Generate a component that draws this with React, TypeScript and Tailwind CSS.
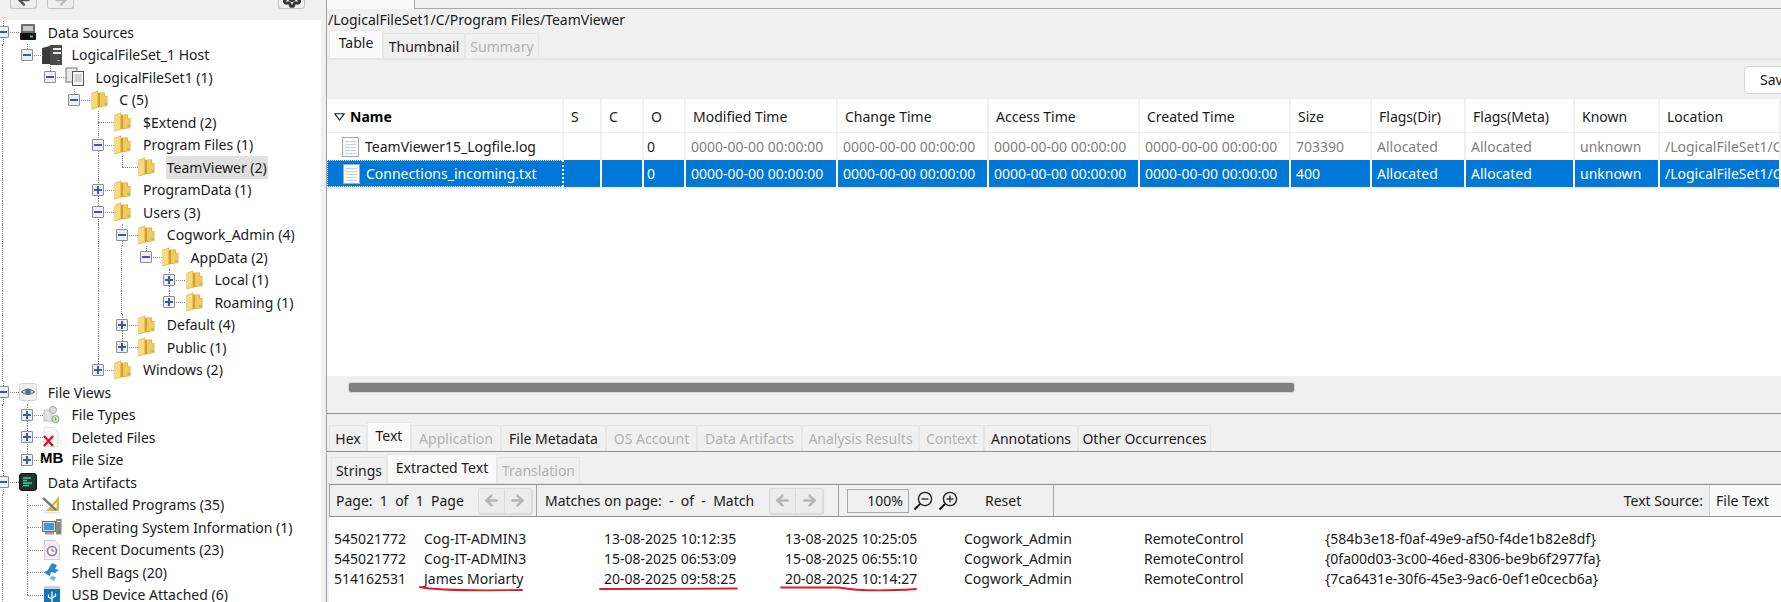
import type { ReactNode } from 'react'
import { ArrowLeft, ArrowRight, Settings } from 'lucide-react'

const FONT = "font-['Noto_Sans','Liberation_Sans',sans-serif] text-[14px] leading-none text-[#1a1a1a]"

function Folder() {
  return (
    <svg width="17" height="20" viewBox="0 0 17 20" className="block">
      <path d="M0.5 3 L7 0.5 L7 2.5 L14 2.5 L14 6 L16.5 6 L16.5 16 L7 17.5 L0.5 19.5 Z" fill="#d9a93c" />
      <path d="M1 3.3 L6.5 1.2 L6.5 17 L1 18.8 Z" fill="#f6da7c" />
      <path d="M7 3 L13.5 3 L13.5 15.5 L7 17 Z" fill="#d59e2e" />
      <path d="M9 3 L9 16.5 L16 15.5 L16 6.5 L13.5 6.5 L13.5 3 Z" fill="#f0c95c" />
      <rect x="13.5" y="13" width="2.5" height="2" fill="#8fc98a" />
    </svg>
  )
}

function Drive() {
  return (
    <svg width="18" height="18" viewBox="0 0 18 18" className="block">
      <rect x="2" y="1" width="14" height="10" rx="1" fill="#6b6b6b" />
      <rect x="4" y="3" width="10" height="5" fill="#c9c9c9" />
      <path d="M1 10 H17 V16 Q17 17 16 17 H2 Q1 17 1 16 Z" fill="#111" />
      <rect x="11" y="12.5" width="3" height="2" fill="#3bbfae" />
    </svg>
  )
}

function Server() {
  return (
    <svg width="20" height="20" viewBox="0 0 20 20" className="block">
      <path d="M0 3 L8 1 V19 H0 Z" fill="#3a3a3a" />
      <rect x="8" y="0" width="12" height="20" fill="#4a4a4a" />
      <rect x="11" y="3" width="8" height="2" fill="#e8e8e8" />
      <rect x="11" y="7" width="8" height="2" fill="#e8e8e8" />
      <rect x="15" y="15" width="3" height="1" fill="#999" />
    </svg>
  )
}

function Docs() {
  return (
    <svg width="20" height="20" viewBox="0 0 20 20" className="block">
      <rect x="1" y="1" width="11" height="14" fill="#e9e9e9" stroke="#777" />
      <rect x="7.5" y="4.5" width="11" height="14" fill="#f5f5f5" stroke="#555" />
      <path d="M9.5 8 H16.5 M9.5 10 H16.5 M9.5 12 H16.5 M9.5 14 H16.5" stroke="#aaa" />
    </svg>
  )
}

function Eye() {
  return (
    <svg width="18" height="18" viewBox="0 0 18 18" className="block">
      <rect x="0.5" y="0.5" width="17" height="17" rx="2" fill="#f1f1f1" stroke="#d5d5d5" />
      <path d="M2.5 9 Q9 3 15.5 9 Q9 14 2.5 9 Z" fill="#bfc9cf" stroke="#666" />
      <circle cx="9" cy="8.7" r="2.6" fill="#4c6f83" />
    </svg>
  )
}

function FileTypes() {
  return (
    <svg width="20" height="20" viewBox="0 0 20 20" className="block">
      <rect x="2" y="5" width="8" height="11" fill="#e3e3e3" stroke="#bdbdbd" />
      <circle cx="11" cy="5" r="3.5" fill="#dcdcdc" stroke="#a8a8a8" />
      <circle cx="13.5" cy="14" r="3.5" fill="#cfe3bd" stroke="#9a9a9a" />
      <rect x="13" y="12.5" width="1" height="3" fill="#6e9a50" />
    </svg>
  )
}

function Deleted() {
  return (
    <svg width="20" height="20" viewBox="0 0 20 20" className="block">
      <path d="M2 0.5 H12 L16 5 V19.5 H2 Z" fill="#f8f8f8" stroke="#e2e2e2" />
      <path d="M2 9 L11 19 M11 9 L2 19" stroke="#e0141b" strokeWidth="2.4" />
    </svg>
  )
}

function Artifacts() {
  return (
    <svg width="18" height="18" viewBox="0 0 18 18" className="block">
      <rect x="0.5" y="0.5" width="17" height="17" rx="2.5" fill="#2a2a2a" stroke="#111" />
      <rect x="2.5" y="3" width="13" height="12" fill="#1d3a33" />
      <path d="M4 5 H12 M4 7.5 H8 M4 10 H13 M4 12.5 H10" stroke="#46c79a" strokeWidth="1.5" />
    </svg>
  )
}

function Installed() {
  return (
    <svg width="20" height="20" viewBox="0 0 20 20" className="block">
      <path d="M17 1 V16 H4 Z M14.5 7.5 L9.5 13.5 H14.5 Z" fill="#d9b93a" fillRule="evenodd" />
      <path d="M1 3 L14 15" stroke="#6e7e88" strokeWidth="2.4" />
      <rect x="2" y="17" width="16" height="1.5" fill="#e5e5e5" />
    </svg>
  )
}

function OsInfo() {
  return (
    <svg width="20" height="18" viewBox="0 0 20 18" className="block">
      <rect x="0.5" y="3.5" width="13" height="10" fill="#d8d8d8" stroke="#6c6c6c" />
      <rect x="2" y="5" width="10" height="7" fill="#3f9ad6" />
      <rect x="3" y="14" width="9" height="2.5" fill="#9a9a9a" />
      <rect x="14" y="1" width="5.5" height="15.5" fill="#8a8a8a" />
      <rect x="15" y="3" width="3.5" height="1" fill="#e5e5e5" />
      <rect x="15.5" y="13" width="3" height="2" fill="#3aa14a" />
    </svg>
  )
}

function Recent() {
  return (
    <svg width="18" height="20" viewBox="0 0 18 20" className="block">
      <path d="M1.5 0.5 H12 L16.5 5 V19.5 H1.5 Z" fill="#f3eef3" stroke="#cfcfcf" />
      <circle cx="9" cy="11" r="4.5" fill="#fff" stroke="#9a6da3" strokeWidth="1.6" />
      <path d="M9 8.5 V11 H11.5" stroke="#7a4d83" fill="none" />
    </svg>
  )
}

function ShellBags() {
  return (
    <svg width="18" height="20" viewBox="0 0 18 20" className="block">
      <path d="M9 1 L14 3 L12 7 L16 8 L12 11 L8 10 L7 14 L3 12 L1 10 L5 8 L7 4 Z" fill="#2c86c4" />
      <path d="M8 14 L13 15 L11 19 L7 17 Z" fill="#6fb6e0" />
    </svg>
  )
}

function Usb() {
  return (
    <svg width="18" height="20" viewBox="0 0 18 20" className="block">
      <rect x="1" y="1" width="16" height="4" fill="#d0d0d0" />
      <rect x="1" y="4" width="16" height="15" fill="#1273b8" />
      <path d="M9 6.5 V17 M5.5 9.5 V12 L9 14 M12.5 8.5 V11 L9 13" stroke="#fff" strokeWidth="1.3" fill="none" />
    </svg>
  )
}

function FileIcon() {
  return (
    <svg width="17" height="20" viewBox="0 0 17 20" className="block">
      <rect x="0.5" y="0.5" width="16" height="19" fill="#fafafa" stroke="#a9a9a9" />
      <path d="M3 4.5 H14 M3 7.5 H14 M3 10.5 H14 M3 13.5 H14 M3 16.5 H14" stroke="#c5d4e4" />
    </svg>
  )
}

type TreeRow = {
  label: string
  level: number
  exp?: '-' | '+'
  guides: number[]
  last?: boolean
  icon: ReactNode
  selected?: boolean
}

const treeRows: TreeRow[] = [
  { label: 'Data Sources', level: 0, exp: '-', guides: [], icon: <Drive /> },
  { label: 'LogicalFileSet_1 Host', level: 1, exp: '-', guides: [0], last: true, icon: <Server /> },
  { label: 'LogicalFileSet1 (1)', level: 2, exp: '-', guides: [0], last: true, icon: <Docs /> },
  { label: 'C (5)', level: 3, exp: '-', guides: [0], last: true, icon: <Folder /> },
  { label: '$Extend (2)', level: 4, guides: [0], icon: <Folder /> },
  { label: 'Program Files (1)', level: 4, exp: '-', guides: [0], icon: <Folder /> },
  { label: 'TeamViewer (2)', level: 5, guides: [0, 4], last: true, icon: <Folder />, selected: true },
  { label: 'ProgramData (1)', level: 4, exp: '+', guides: [0], icon: <Folder /> },
  { label: 'Users (3)', level: 4, exp: '-', guides: [0], icon: <Folder /> },
  { label: 'Cogwork_Admin (4)', level: 5, exp: '-', guides: [0, 4], icon: <Folder /> },
  { label: 'AppData (2)', level: 6, exp: '-', guides: [0, 4, 5], last: true, icon: <Folder /> },
  { label: 'Local (1)', level: 7, exp: '+', guides: [0, 4, 5], icon: <Folder /> },
  { label: 'Roaming (1)', level: 7, exp: '+', guides: [0, 4, 5], last: true, icon: <Folder /> },
  { label: 'Default (4)', level: 5, exp: '+', guides: [0, 4], icon: <Folder /> },
  { label: 'Public (1)', level: 5, exp: '+', guides: [0, 4], last: true, icon: <Folder /> },
  { label: 'Windows (2)', level: 4, exp: '+', guides: [0], last: true, icon: <Folder /> },
  { label: 'File Views', level: 0, exp: '-', guides: [], icon: <Eye /> },
  { label: 'File Types', level: 1, exp: '+', guides: [0], icon: <FileTypes /> },
  { label: 'Deleted Files', level: 1, exp: '+', guides: [0], icon: <Deleted /> },
  {
    label: 'File Size',
    level: 1,
    exp: '+',
    guides: [0],
    last: true,
    icon: <span className="block text-[15px] font-bold text-black font-['Liberation_Sans'] -mt-[4px]">MB</span>,
  },
  { label: 'Data Artifacts', level: 0, exp: '-', guides: [], icon: <Artifacts /> },
  { label: 'Installed Programs (35)', level: 1, guides: [0], icon: <Installed /> },
  { label: 'Operating System Information (1)', level: 1, guides: [0], icon: <OsInfo /> },
  { label: 'Recent Documents (23)', level: 1, guides: [0], icon: <Recent /> },
  { label: 'Shell Bags (20)', level: 1, guides: [0], icon: <ShellBags /> },
  { label: 'USB Device Attached (6)', level: 1, guides: [0], last: true, icon: <Usb /> },
]

const dotLine = 'border-[#8a8a8a] border-dotted'

function Tree() {
  return (
    <div className="flex-1 bg-white overflow-hidden pt-[1px] mr-[5px]">
      {treeRows.map(r => (
        <div key={r.label} className="flex items-center h-[22.5px] -ml-[9px]">
          {Array.from({ length: r.level }).map((_, i) => (
            <div key={i} className="w-[23.8px] h-full shrink-0 flex justify-center">
              {r.guides.includes(i) && <div className={`h-full border-l ${dotLine}`} />}
            </div>
          ))}
          {/* own level cell: connectors sit behind the expander box */}
          <div className="relative w-[23.8px] h-full shrink-0 flex items-center justify-center">
            <div
              className={`absolute left-1/2 top-0 border-l ${dotLine} ${r.last || r.level === 0 ? 'h-1/2' : 'h-full'}`}
            />
            {r.level === 0 && <div className={`absolute left-1/2 top-1/2 h-1/2 border-l ${dotLine}`} />}
            <div className={`absolute left-1/2 top-1/2 w-[16px] border-t ${dotLine}`} />
            {r.exp && (
              <div className="relative w-[12px] h-[12px] bg-[#eef0f3] border border-[#8d8d8d] rounded-[1px] flex items-center justify-center">
                <div className="w-[8px] h-[2px] bg-[#3f5a9e]" />
                {r.exp === '+' && <div className="absolute w-[2px] h-[8px] bg-[#3f5a9e]" />}
              </div>
            )}
          </div>
          <div className="w-[32px] shrink-0 pl-[3px]">
            <div className="w-5 flex justify-center">{r.icon}</div>
          </div>
          <span className={`px-px whitespace-nowrap leading-[23px] ${r.selected ? 'bg-[#e0e0e0]' : ''}`}>{r.label}</span>
        </div>
      ))}
    </div>
  )
}

function TopButton({ children }: { children: ReactNode }) {
  return (
    <div className="w-[27px] h-[9px] bg-[#eeeeee] border border-t-0 border-[#c4c4c4] rounded-b-[3px] flex items-end justify-center overflow-hidden text-[#8a8a8a]">
      {children}
    </div>
  )
}

function Sidebar() {
  return (
    <aside className="w-[326px] shrink-0 flex flex-col bg-[#f0f0f0]">
      <div className="h-[20px] flex pl-[10px] pr-[21px] gap-[10px]">
        <TopButton>
          <ArrowLeft size={16} strokeWidth={3.5} className="text-[#555] shrink-0" />
        </TopButton>
        <TopButton>
          <ArrowRight size={16} strokeWidth={3.5} className="text-[#bbb] shrink-0" />
        </TopButton>
        <div className="flex-1" />
        <TopButton>
          <Settings size={20} strokeWidth={3.5} className="text-[#333] shrink-0" />
        </TopButton>
      </div>
      <Tree />
    </aside>
  )
}

function Tab({ label, state, w }: { label: string; state?: 'active' | 'disabled'; w: string }) {
  return (
    <div
      className={`${w} shrink-0 flex items-center justify-center border border-b-0 border-[#e6e6e6] whitespace-nowrap ${
        state === 'active' ? 'bg-[#fafafa] h-full pb-[3px]' : 'h-[calc(100%-3px)] mt-[3px] pt-[1px]'
      } ${state === 'disabled' ? 'text-[#b0b0b0]' : ''}`}
    >
      {label}
    </div>
  )
}

const tableGrid = 'grid grid-cols-[237px_38px_42px_42px_152px_151px_151px_151px_81px_94px_109px_85px_1fr]'

const headers = [
  'Name', 'S', 'C', 'O', 'Modified Time', 'Change Time', 'Access Time', 'Created Time',
  'Size', 'Flags(Dir)', 'Flags(Meta)', 'Known', 'Location',
]

const zero = '0000-00-00 00:00:00'
const rowRest = [zero, zero, zero, zero]
const location = '/LogicalFileSet1/C/Program Files/TeamViewer/'

function FileTable() {
  return (
    <div className="flex-1 bg-white overflow-hidden">
      <div className={`${tableGrid} h-[34px] border-b border-[#f0f0f0]`}>
        {headers.map((h, i) => (
          <div
            key={h}
            className={`bg-white border-r-2 border-[#f0f0f0] flex items-center pt-[3px] overflow-hidden whitespace-nowrap ${
              i === 0 ? 'font-bold text-black pl-[7px] gap-[5px]' : 'pl-[7px]'
            }`}
          >
            {i === 0 && (
              <svg width="11" height="8" viewBox="0 0 11 8">
                <path d="M0.7 0.7 H10.3 L5.5 7 Z" fill="none" stroke="#222" strokeWidth="1.1" />
              </svg>
            )}
            {h}
          </div>
        ))}
      </div>
      <Row
        name="TeamViewer15_Logfile.log"
        size="703390"
        textClass="text-[#808080]"
        cellClass="border-r-2 border-[#f0f0f0]"
      />
      <Row name="Connections_incoming.txt" size="400" selected textClass="text-white" cellClass="bg-[#0078d7] border-r-2 border-white" />
      <div className="h-[2px] bg-[#f0f0f0]" />
    </div>
  )
}

function Row({
  name,
  size,
  selected,
  textClass,
  cellClass,
}: {
  name: string
  size: string
  selected?: boolean
  textClass: string
  cellClass: string
}) {
  const rest = [...rowRest, size, 'Allocated', 'Allocated', 'unknown', location]
  return (
    <div className={`${tableGrid} h-[27px]`}>
      <div
        className={`${cellClass} flex items-center pl-[15px] gap-[6px] whitespace-nowrap ${
          selected ? 'text-white border-[1px] border-dotted border-[#e8872c]' : ''
        }`}
      >
        <FileIcon />
        {name}
      </div>
      <div className={cellClass} />
      <div className={cellClass} />
      <div className={`${cellClass} flex items-center pl-[3px] ${selected ? 'text-white' : ''}`}>0</div>
      {rest.map((v, i) => (
        <div
          key={i}
          className={`${cellClass} ${textClass} flex items-center pl-[5px] overflow-hidden whitespace-nowrap`}
        >
          {v}
        </div>
      ))}
    </div>
  )
}

function NavButtons() {
  return (
    <div className="flex h-[26px] rounded-[3px] border border-[#dcdcdc] shadow-[1px_1px_1px_#d8d8d8] bg-[#ececec]">
      <div className="w-[26px] flex items-center justify-center border-r border-[#dcdcdc]">
        <ArrowLeft size={17} strokeWidth={3.5} className="text-[#b5b5b5]" />
      </div>
      <div className="w-[26px] flex items-center justify-center">
        <ArrowRight size={17} strokeWidth={3.5} className="text-[#b5b5b5]" />
      </div>
    </div>
  )
}

function ZoomIcon({ plus }: { plus?: boolean }) {
  return (
    <svg width="20" height="20" viewBox="0 0 20 20">
      <circle cx="12" cy="8" r="6.6" fill="none" stroke="#222" strokeWidth="1.4" />
      <path d="M7 13 L1.5 18.5" stroke="#111" strokeWidth="2" />
      <path d="M8.5 8 H15.5" stroke="#333" strokeWidth="1.4" />
      {plus && <path d="M12 4.5 V11.5" stroke="#333" strokeWidth="1.4" />}
    </svg>
  )
}

function PageToolbar() {
  return (
    <div className="h-[33px] flex items-center border-y border-[#8f9396] ml-[2px]">
      <div className="flex items-center h-full w-[208px] pl-[6px] border-r border-[#a0a4a7] border-l">
        <span className="whitespace-pre">Page:  1  of  1  Page</span>
        <div className="ml-[14px]">
          <NavButtons />
        </div>
      </div>
      <div className="flex items-center h-full w-[302px] pl-[8px] border-r border-[#a0a4a7]">
        <span className="whitespace-pre">Matches on page:  -  of  -  Match</span>
        <div className="ml-[15px]">
          <NavButtons />
        </div>
      </div>
      <div className="flex items-center h-full w-[215px] pl-[8px] border-r border-[#a0a4a7]">
        <div className="w-[62px] h-[24px] border border-[#a9a9a9] flex items-center justify-end pr-[5px]">100%</div>
        <div className="ml-[4px] flex gap-[5px]">
          <ZoomIcon />
          <ZoomIcon plus />
        </div>
        <span className="ml-[27px]">Reset</span>
      </div>
      <div className="flex-1 flex items-center justify-end h-full">
        <span className="mr-[6px]">Text Source:</span>
        <div className="w-[72px] h-full bg-[#fafafa] border-l border-[#d5d5d5] flex items-center pl-[6px] whitespace-nowrap">
          File Text
        </div>
      </div>
    </div>
  )
}

const textGrid = 'grid grid-cols-[90px_180px_181px_179px_180px_181px_1fr] h-[20px] items-center'

const extractedRows = [
  ['545021772', 'Cog-IT-ADMIN3', '13-08-2025 10:12:35', '13-08-2025 10:25:05', '{584b3e18-f0af-49e9-af50-f4de1b82e8df}'],
  ['545021772', 'Cog-IT-ADMIN3', '15-08-2025 06:53:09', '15-08-2025 06:55:10', '{0fa00d03-3c00-46ed-8306-be9b6f2977fa}'],
  ['514162531', 'James Moriarty', '20-08-2025 09:58:25', '20-08-2025 10:14:27', '{7ca6431e-30f6-45e3-9ac6-0ef1e0cecb6a}'],
]

function Underline({ w, d }: { w: string; d: string }) {
  return (
    <svg viewBox="0 0 140 6" className={`absolute left-[-5px] top-[14px] h-[6px] ${w}`} preserveAspectRatio="none">
      <path d={d} fill="none" stroke="#e01b24" strokeWidth="1.8" strokeLinecap="round" />
    </svg>
  )
}

function ExtractedText() {
  return (
    <div className="flex-1 bg-white pt-[12px] pl-[5px] ml-[2px]">
      {extractedRows.map((r, i) => {
        const marked = i === 2
        return (
          <div key={i} className={textGrid}>
            <span>{r[0]}</span>
            <span className="relative whitespace-nowrap">
              {r[1]}
              {marked && <Underline w="w-[104px]" d="M1 1 C 20 4, 60 5, 139 4" />}
            </span>
            <span className="relative whitespace-nowrap">
              {r[2]}
              {marked && <Underline w="w-[139px]" d="M1 3 C 40 3, 100 3, 139 2.5" />}
            </span>
            <span className="relative whitespace-nowrap">
              {r[3]}
              {marked && <Underline w="w-[137px]" d="M1 1.5 L 60 1.5 C 80 5, 110 5, 139 3" />}
            </span>
            <span className="whitespace-nowrap">Cogwork_Admin</span>
            <span className="whitespace-nowrap">RemoteControl</span>
            <span className="whitespace-nowrap">{r[4]}</span>
          </div>
        )
      })}
    </div>
  )
}

export default function App() {
  return (
    <div className={`${FONT} w-[1781px] h-[602px] overflow-hidden flex bg-[#f0f0f0]`}>
      <Sidebar />
      <main className="flex-1 min-w-0 flex flex-col border-l border-[#a0a0a0]">
        <div className="h-[9px] shrink-0 flex border-b border-[#a8a8a8]">
          <div className="w-[88px] h-[9px] bg-[#fafafa] border-r border-[#a8a8a8]" />
        </div>
        <div className="h-[21px] shrink-0 flex items-center pl-[1px]">/LogicalFileSet1/C/Program Files/TeamViewer</div>
        <div className="h-[30px] shrink-0 flex pl-[2px] border-b-2 border-[#e6e6e6]">
          <Tab label="Table" state="active" w="w-[54px]" />
          <Tab label="Thumbnail" w="w-[82px]" />
          <Tab label="Summary" state="disabled" w="w-[74px]" />
        </div>
        <div className="h-[39px] shrink-0 flex justify-end pt-[6px] -mr-[8px]">
          <div className="w-[45px] h-[28px] bg-white border border-[#d5d5d5] rounded-[4px] pl-[15px] flex items-center overflow-hidden">
            Save
          </div>
        </div>
        <div className="h-[277px] shrink-0 flex flex-col">
          <FileTable />
        </div>
        <div className="h-[38px] shrink-0 pt-[7px] pl-[22px] border-b border-[#8f9396]">
          <div className="w-[945px] h-[9px] bg-[#808080] rounded-[2px] shadow-[0_0_0_1px_#d8d8d8]" />
        </div>
        <div className="h-[38px] shrink-0 flex items-end pl-[2px] border-b border-[#8f9396]">
          <div className="flex h-[29px]">
            <Tab label="Hex" w="w-[38px]" />
            <Tab label="Text" state="active" w="w-[44px]" />
            <Tab label="Application" state="disabled" w="w-[90px]" />
            <Tab label="File Metadata" w="w-[105px]" />
            <Tab label="OS Account" state="disabled" w="w-[91px]" />
            <Tab label="Data Artifacts" state="disabled" w="w-[105px]" />
            <Tab label="Analysis Results" state="disabled" w="w-[117px]" />
            <Tab label="Context" state="disabled" w="w-[65px]" />
            <Tab label="Annotations" w="w-[94px]" />
            <Tab label="Other Occurrences" w="w-[133px]" />
          </div>
        </div>
        <div className="h-[32px] shrink-0 flex items-end pl-[4px] border-b border-[#e2e2e2]">
          <div className="flex h-[29px]">
            <Tab label="Strings" w="w-[56px]" />
            <Tab label="Extracted Text" state="active" w="w-[110px]" />
            <Tab label="Translation" state="disabled" w="w-[83px]" />
          </div>
        </div>
        <PageToolbar />
        <ExtractedText />
      </main>
    </div>
  )
}
